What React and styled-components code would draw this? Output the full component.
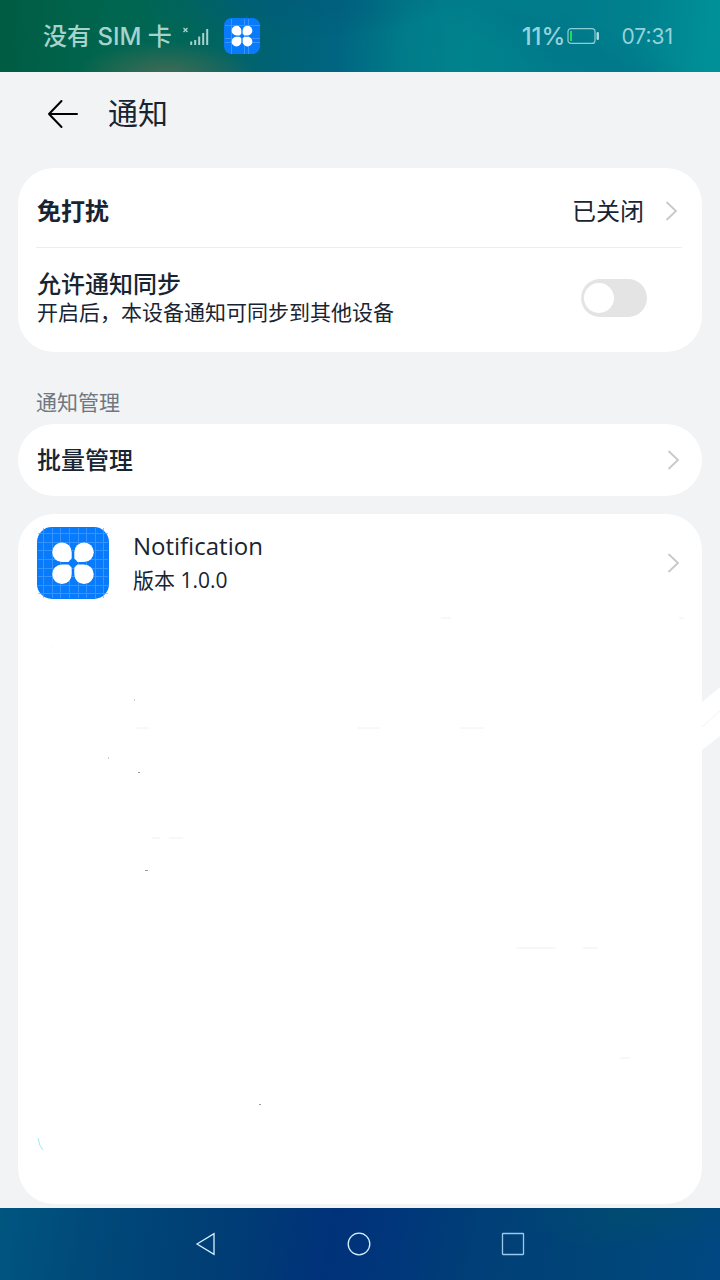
import React, { useState } from 'react';
import styled, { createGlobalStyle } from 'styled-components';

const GlobalStyle = createGlobalStyle`
  * {
    box-sizing: border-box;
  }

  body {
    margin: 0;
    background: #f1f3f5;
    color: #182431;
    font-family: "Open Sans", "Noto Sans CJK SC", sans-serif;
  }

  button {
    font: inherit;
    color: inherit;
    border: 0;
    padding: 0;
    background: none;
    cursor: pointer;
  }
`;

const gridLines = [6, 15, 23, 32, 41, 49, 58, 66];

function AppIcon({ size, lines }) {
  return (
    <svg width={size} height={size} viewBox="0 0 72 72" aria-hidden="true">
      <rect width="72" height="72" rx="15" fill="#077bfb" />
      <g stroke="#55a6ff" strokeWidth={72 / size} opacity="0.6" shapeRendering="crispEdges">
        {lines.map((p) => (
          <path key={p} d={`M${p + 0.5} 1V71M1 ${p + 0.5}H71`} />
        ))}
      </g>
      <g fill="#fff">
        <path d="M25 15.5a9.7 9.7 0 0 1 9.7 9.7v5.3a4.5 4.5 0 0 1-4.5 4.5H25a9.7 9.7 0 0 1 0-19.5z" />
        <path d="M47 15.5a9.7 9.7 0 0 0-9.7 9.7v5.3a4.5 4.5 0 0 0 4.5 4.5H47a9.7 9.7 0 0 0 0-19.5z" />
        <path d="M25 57a9.7 9.7 0 0 0 9.7-9.7V42a4.5 4.5 0 0 0-4.5-4.5H25A9.7 9.7 0 0 0 25 57z" />
        <path d="M47 57a9.7 9.7 0 0 1-9.7-9.7V42a4.5 4.5 0 0 1 4.5-4.5H47A9.7 9.7 0 0 1 47 57z" />
      </g>
      <circle cx="36" cy="36" r="4" fill="#077bfb" />
    </svg>
  );
}

function Chevron() {
  return (
    <svg width="14" height="22" viewBox="0 0 14 22" fill="none" aria-hidden="true">
      <path d="M2 2.5l9 8.5L2 19.5" stroke="#c6c8ca" strokeWidth="1.8" strokeLinecap="round" />
    </svg>
  );
}

function App() {
  const [sync, setSync] = useState(false);

  return (
    <Page>
      <GlobalStyle />
      <StatusBar>
        <Carrier>没有 SIM 卡</Carrier>
        <svg width="28" height="20" viewBox="0 0 28 20" aria-hidden="true">
          <path d="M1.5 2l4 4m0-4l-4 4" stroke="#a6d3cc" strokeWidth="1.4" />
          <path
            d="M9.2 15.5V19M13.2 14v5M17.2 10.5V19M21.2 7v12M25.2 3v16"
            stroke="#a6d3cc"
            strokeWidth="2"
          />
        </svg>
        <AppIcon size={36} lines={[15, 41, 49]} />
        <Battery>
          11%
          <svg width="34" height="18" viewBox="0 0 34 18" aria-hidden="true">
            <rect x="1" y="1.6" width="27" height="14.8" rx="3" fill="none" stroke="#8ccdd6" strokeWidth="1.2" />
            <rect x="3" y="4" width="2" height="10" fill="#1fdc5c" />
            <rect x="29.5" y="5" width="2.5" height="8" rx="1.2" fill="#a6dbe1" />
          </svg>
        </Battery>
        <Clock>07:31</Clock>
      </StatusBar>

      <Header>
        <BackButton aria-label="返回">
          <svg width="32" height="30" viewBox="0 0 32 30" fill="none" aria-hidden="true">
            <path d="M15.5 2L3 15 15.5 28M3 15H31" stroke="#000" strokeWidth="2" strokeLinecap="round" strokeLinejoin="round" />
          </svg>
        </BackButton>
        <h1>通知</h1>
      </Header>

      <Main>
        <Card>
          <Row $height={79} $inset={23} $top={6}>
            <Label $weight={700}>免打扰</Label>
            <Value $weight={400}>已关闭</Value>
            <Chevron />
          </Row>
          <Divider />
          <SyncRow>
            <label htmlFor="sync">
              <Label>允许通知同步</Label>
              <Note>开启后，本设备通知可同步到其他设备</Note>
            </label>
            <Switch
              id="sync"
              type="checkbox"
              checked={sync}
              onChange={(e) => setSync(e.target.checked)}
            />
          </SyncRow>
        </Card>

        <SectionTitle>通知管理</SectionTitle>
        <Card>
          <Row $height={72} $inset={21}>
            <Label>批量管理</Label>
            <Chevron />
          </Row>
        </Card>

        <AppList>
          <Row $height={97} $inset={21}>
            <AppIcon size={72} lines={gridLines} />
            <AppText>
              <Label>Notification</Label>
              <Note>版本 1.0.0</Note>
            </AppText>
            <Chevron />
          </Row>
          <Streak width="18" height="64" viewBox="0 0 18 64" aria-hidden="true">
            <path d="M0 15L18 0V49L0 63z" fill="#fff" />
            <path d="M0 40L18 24" stroke="#f1f3f5" />
          </Streak>
          <Specks width="666" height="640" viewBox="0 0 666 640" aria-hidden="true">
            <path
              d="M423 104h10M661 104h5M118 214h13M340 214h22M442 214h24M498 434h40M565 434h15M602 544h10M134 324h8M151 324h14M33 132h1"
              stroke="#f0f0f0"
            />
            <path d="M120 258.500h2M127 356.500h3M241 590.500h2M116 186h1M90 244h1" stroke="#9a9a9a" />
            <path d="M20 624q1 8 5 12" stroke="#9be8f5" />
          </Specks>
        </AppList>
      </Main>

      <NavBar>
        <button aria-label="返回">
          <svg width="26" height="26" viewBox="0 0 26 26" aria-hidden="true">
            <path d="M4 13L21 2.7V23.3z" />
          </svg>
        </button>
        <button aria-label="主页">
          <svg width="26" height="26" viewBox="0 0 26 26" aria-hidden="true">
            <circle cx="12" cy="13" r="10.8" />
          </svg>
        </button>
        <button aria-label="最近任务">
          <svg width="26" height="26" viewBox="0 0 26 26" aria-hidden="true">
            <rect x="1.500" y="2.500" width="21" height="21" rx="0.5" stroke="#9cc8ee" />
          </svg>
        </button>
      </NavBar>
    </Page>
  );
}

const Page = styled.div`
  min-height: 100vh;
  display: flex;
  flex-direction: column;
`;

const StatusBar = styled.div`
  height: 72px;
  padding: 0 47px 0 43px;
  display: flex;
  align-items: center;
  color: #a6d3cc;
  font-size: 24px;
  font-weight: 500;
  font-family: Inter, "Noto Sans CJK SC", sans-serif;
  background:
    radial-gradient(ellipse 90px 34px at 23% 105%, rgba(80, 108, 84, 0.85), transparent),
    radial-gradient(ellipse 150px 40px at 41% 0%, rgba(0, 92, 122, 0.7), transparent),
    linear-gradient(25deg, transparent 62%, rgba(0, 112, 134, 0.35) 72%, transparent 80%),
    linear-gradient(95deg, #005c43 0%, #00664f 16%, #00665a 27%, #006274 38%, #006582 47%, #007b89 56%, #00838d 65%, #007c8b 78%, #00808e 88%, #009097 98%);

  > svg + svg {
    margin-left: 14px;
  }
`;

const Carrier = styled.span`
  margin-right: 10px;
  padding-bottom: 4px;
`;

const Battery = styled.div`
  margin-left: auto;
  display: flex;
  align-items: center;
  gap: 2px;
  color: #95d2da;
`;

const Clock = styled.time`
  margin-left: 20px;
  color: #95d2da;
  font-size: 21px;
  font-weight: 400;
`;

const Header = styled.header`
  height: 96px;
  padding: 0 46px 12px;
  display: flex;
  align-items: center;
  gap: 30px;

  h1 {
    margin: 0;
    padding-bottom: 2px;
    font-size: 30px;
    line-height: 40px;
    font-weight: 400;
  }
`;

const BackButton = styled.button`
  display: flex;
`;

const Main = styled.main`
  flex: 1;
  display: flex;
  flex-direction: column;
  padding: 0 18px 4px;
`;

const Card = styled.section`
  background: #fff;
  border-radius: 36px;
`;

const AppList = styled(Card)`
  flex: 1;
  margin-top: 18px;
  position: relative;
`;

const Streak = styled.svg`
  position: absolute;
  left: 100%;
  top: 173px;
`;

const Specks = styled.svg`
  position: absolute;
  left: 0;
  top: 0;
  fill: none;
  pointer-events: none;
`;

const Row = styled.button`
  width: 100%;
  height: ${(props) => props.$height}px;
  padding: ${(props) => props.$top || 0}px ${(props) => props.$inset}px 0 19px;
  display: flex;
  align-items: center;
  text-align: left;

  > svg:last-child {
    margin-left: auto;
  }
`;

const Label = styled.span`
  display: block;
  font-size: 24px;
  line-height: 28px;
  font-weight: ${(props) => props.$weight || 500};
`;

const Value = styled(Label)`
  margin-left: auto;

  && + svg:last-child {
    margin-left: 21px;
  }
`;

const Note = styled.span`
  display: block;
  font-size: 21px;
  line-height: 28px;
`;

const Divider = styled.hr`
  margin: 0 20px 0 18px;
  border: 0;
  border-top: 1px solid #eeeeef;
`;

const SyncRow = styled.div`
  height: 104px;
  padding: 0 55px 4px 19px;
  display: flex;
  align-items: center;
  justify-content: space-between;
`;

const Switch = styled.input`
  appearance: none;
  margin: 0;
  width: 66px;
  height: 38px;
  padding: 4px 3px;
  border-radius: 19px;
  background: ${(props) => (props.checked ? '#007dff' : '#e4e4e4')};
  cursor: pointer;

  &::before {
    content: '';
    display: block;
    width: 30px;
    height: 30px;
    border-radius: 50%;
    background: #fff;
    margin-left: ${(props) => (props.checked ? '30px' : '0')};
  }
`;

const SectionTitle = styled.h2`
  margin: 0;
  padding: 36px 18px 8px;
  color: #6f7880;
  font-size: 21px;
  line-height: 28px;
  font-weight: 400;
`;

const AppText = styled.span`
  margin-left: 24px;
  display: flex;
  flex-direction: column;
  gap: 6px;
`;

const NavBar = styled.nav`
  height: 72px;
  display: flex;
  align-items: center;
  justify-content: center;
  gap: 128px;
  background:
    radial-gradient(ellipse 120px 44px at 88% 0%, rgba(0, 80, 108, 0.6), transparent),
    linear-gradient(100deg, #005680 0%, #004a7a 12%, #004175 26%, #003a76 36%, #00327a 46%, #00367b 54%, #003f77 66%, #004577 82%, #004882 100%);

  button {
    display: flex;
  }

  svg {
    fill: none;
    stroke: #d5f1ff;
    stroke-width: 1.3;
  }
`;

export default App;
